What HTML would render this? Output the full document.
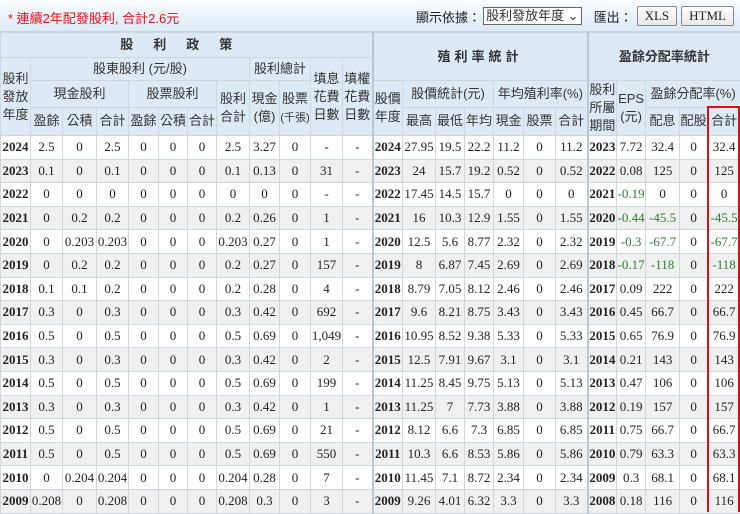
<!DOCTYPE html>
<html><head><meta charset="utf-8"><style>
*{margin:0;padding:0;box-sizing:border-box}
body{width:740px;height:512px;overflow:hidden;background:#fff;position:relative;font-family:"Liberation Serif","Noto Serif CJK SC",serif;}
.top{position:absolute;left:0;top:0;width:740px;height:32px;background:linear-gradient(#fbfdff,#dce9f6);border-bottom:1px solid #c8d6e4}
.note{position:absolute;left:8px;top:8px;color:#e8101a;font:13px "Liberation Sans","Noto Sans CJK TC",sans-serif}
.ctl{position:absolute;right:6px;top:6px;font:13px "Liberation Sans","Noto Sans CJK TC",sans-serif;color:#222;display:flex;align-items:center}
.sel{border:1px solid #666;background:#fff;padding:0 2px;height:18px;line-height:16px;margin:0 12px 0 2px;font-size:13px;color:#333}
.btn{border:1px solid #888;background:linear-gradient(#fff,#e8e8e8);height:20px;line-height:18px;padding:0 7px;margin-left:4px;font-family:"Liberation Serif",serif;font-size:13px;border-radius:2px}
table{position:absolute;left:0;top:32px;border-collapse:collapse;table-layout:fixed;width:740px}
td,th{border:1px solid #cfd6dd;text-align:center;font-size:13px;color:#222;overflow:hidden;white-space:nowrap;padding:0}
th{background:#dde9f5;font-weight:normal;font-family:"Liberation Sans","Noto Sans CJK TC",sans-serif;color:#333;line-height:18px}
td{height:23.6px}
td:first-child,td.y{font-weight:bold}
.s{border-left:2px solid #b9c8d7}
tbody tr:nth-child(even) td{background:#f0f0f0}
.g{color:#2e7d32}
.box{position:absolute;left:707px;top:106px;width:33px;height:406px;border:2px solid #e01010;border-bottom:none}
.sm{font-size:11px}
</style></head><body>
<div class="top"><div class="note">* 連續2年配發股利, 合計2.6元</div>
<div class="ctl">顯示依據：<span class="sel">股利發放年度 ⌄</span>匯出：<span class="btn">XLS</span><span class="btn">HTML</span></div></div>
<table>
<colgroup><col style="width:30px"><col style="width:32px"><col style="width:34px"><col style="width:32px"><col style="width:30px"><col style="width:29px"><col style="width:29px"><col style="width:33px"><col style="width:30px"><col style="width:31px"><col style="width:32px"><col style="width:30px"><col style="width:30px"><col style="width:33px"><col style="width:29px"><col style="width:29px"><col style="width:30px"><col style="width:32px"><col style="width:32px"><col style="width:29px"><col style="width:29px"><col style="width:34px"><col style="width:28px"><col style="width:33px"></colgroup>
<thead>
<tr style="height:25px"><th colspan="12" style="font-weight:bold;letter-spacing:20px">股利政策</th><th colspan="7" rowspan="2" class="s" style="font-weight:bold;letter-spacing:4px">殖利率統計</th><th colspan="5" rowspan="2" class="s" style="font-weight:bold">盈餘分配率統計</th></tr>
<tr style="height:23px"><th rowspan="3">股利<br>發放<br>年度</th><th colspan="7">股東股利 (元/股)</th><th colspan="2">股利總計</th><th rowspan="3">填息<br>花費<br>日數</th><th rowspan="3">填權<br>花費<br>日數</th></tr>
<tr style="height:26px"><th colspan="3">現金股利</th><th colspan="3">股票股利</th><th rowspan="2">股利<br>合計</th><th rowspan="2">現金<br>(億)</th><th rowspan="2">股票<br><span class="sm">(千張)</span></th><th rowspan="2" class="s">股價<br>年度</th><th colspan="3">股價統計(元)</th><th colspan="3">年均殖利率(%)</th><th rowspan="2" class="s">股利<br>所屬<br>期間</th><th rowspan="2">EPS<br>(元)</th><th colspan="3">盈餘分配率(%)</th></tr>
<tr style="height:27px"><th>盈餘</th><th>公積</th><th>合計</th><th>盈餘</th><th>公積</th><th>合計</th><th>最高</th><th>最低</th><th>年均</th><th>現金</th><th>股票</th><th>合計</th><th>配息</th><th>配股</th><th>合計</th></tr>
</thead>
<tbody>
<tr><td>2024</td><td>2.5</td><td>0</td><td>2.5</td><td>0</td><td>0</td><td>0</td><td>2.5</td><td>3.27</td><td>0</td><td>-</td><td>-</td><td class="y s">2024</td><td>27.95</td><td>19.5</td><td>22.2</td><td>11.2</td><td>0</td><td>11.2</td><td class="y s">2023</td><td>7.72</td><td>32.4</td><td>0</td><td>32.4</td></tr>
<tr><td>2023</td><td>0.1</td><td>0</td><td>0.1</td><td>0</td><td>0</td><td>0</td><td>0.1</td><td>0.13</td><td>0</td><td>31</td><td>-</td><td class="y s">2023</td><td>24</td><td>15.7</td><td>19.2</td><td>0.52</td><td>0</td><td>0.52</td><td class="y s">2022</td><td>0.08</td><td>125</td><td>0</td><td>125</td></tr>
<tr><td>2022</td><td>0</td><td>0</td><td>0</td><td>0</td><td>0</td><td>0</td><td>0</td><td>0</td><td>0</td><td>-</td><td>-</td><td class="y s">2022</td><td>17.45</td><td>14.5</td><td>15.7</td><td>0</td><td>0</td><td>0</td><td class="y s">2021</td><td class="g">-0.19</td><td>0</td><td>0</td><td>0</td></tr>
<tr><td>2021</td><td>0</td><td>0.2</td><td>0.2</td><td>0</td><td>0</td><td>0</td><td>0.2</td><td>0.26</td><td>0</td><td>1</td><td>-</td><td class="y s">2021</td><td>16</td><td>10.3</td><td>12.9</td><td>1.55</td><td>0</td><td>1.55</td><td class="y s">2020</td><td class="g">-0.44</td><td class="g">-45.5</td><td>0</td><td class="g">-45.5</td></tr>
<tr><td>2020</td><td>0</td><td>0.203</td><td>0.203</td><td>0</td><td>0</td><td>0</td><td>0.203</td><td>0.27</td><td>0</td><td>1</td><td>-</td><td class="y s">2020</td><td>12.5</td><td>5.6</td><td>8.77</td><td>2.32</td><td>0</td><td>2.32</td><td class="y s">2019</td><td class="g">-0.3</td><td class="g">-67.7</td><td>0</td><td class="g">-67.7</td></tr>
<tr><td>2019</td><td>0</td><td>0.2</td><td>0.2</td><td>0</td><td>0</td><td>0</td><td>0.2</td><td>0.27</td><td>0</td><td>157</td><td>-</td><td class="y s">2019</td><td>8</td><td>6.87</td><td>7.45</td><td>2.69</td><td>0</td><td>2.69</td><td class="y s">2018</td><td class="g">-0.17</td><td class="g">-118</td><td>0</td><td class="g">-118</td></tr>
<tr><td>2018</td><td>0.1</td><td>0.1</td><td>0.2</td><td>0</td><td>0</td><td>0</td><td>0.2</td><td>0.28</td><td>0</td><td>4</td><td>-</td><td class="y s">2018</td><td>8.79</td><td>7.05</td><td>8.12</td><td>2.46</td><td>0</td><td>2.46</td><td class="y s">2017</td><td>0.09</td><td>222</td><td>0</td><td>222</td></tr>
<tr><td>2017</td><td>0.3</td><td>0</td><td>0.3</td><td>0</td><td>0</td><td>0</td><td>0.3</td><td>0.42</td><td>0</td><td>692</td><td>-</td><td class="y s">2017</td><td>9.6</td><td>8.21</td><td>8.75</td><td>3.43</td><td>0</td><td>3.43</td><td class="y s">2016</td><td>0.45</td><td>66.7</td><td>0</td><td>66.7</td></tr>
<tr><td>2016</td><td>0.5</td><td>0</td><td>0.5</td><td>0</td><td>0</td><td>0</td><td>0.5</td><td>0.69</td><td>0</td><td>1,049</td><td>-</td><td class="y s">2016</td><td>10.95</td><td>8.52</td><td>9.38</td><td>5.33</td><td>0</td><td>5.33</td><td class="y s">2015</td><td>0.65</td><td>76.9</td><td>0</td><td>76.9</td></tr>
<tr><td>2015</td><td>0.3</td><td>0</td><td>0.3</td><td>0</td><td>0</td><td>0</td><td>0.3</td><td>0.42</td><td>0</td><td>2</td><td>-</td><td class="y s">2015</td><td>12.5</td><td>7.91</td><td>9.67</td><td>3.1</td><td>0</td><td>3.1</td><td class="y s">2014</td><td>0.21</td><td>143</td><td>0</td><td>143</td></tr>
<tr><td>2014</td><td>0.5</td><td>0</td><td>0.5</td><td>0</td><td>0</td><td>0</td><td>0.5</td><td>0.69</td><td>0</td><td>199</td><td>-</td><td class="y s">2014</td><td>11.25</td><td>8.45</td><td>9.75</td><td>5.13</td><td>0</td><td>5.13</td><td class="y s">2013</td><td>0.47</td><td>106</td><td>0</td><td>106</td></tr>
<tr><td>2013</td><td>0.3</td><td>0</td><td>0.3</td><td>0</td><td>0</td><td>0</td><td>0.3</td><td>0.42</td><td>0</td><td>1</td><td>-</td><td class="y s">2013</td><td>11.25</td><td>7</td><td>7.73</td><td>3.88</td><td>0</td><td>3.88</td><td class="y s">2012</td><td>0.19</td><td>157</td><td>0</td><td>157</td></tr>
<tr><td>2012</td><td>0.5</td><td>0</td><td>0.5</td><td>0</td><td>0</td><td>0</td><td>0.5</td><td>0.69</td><td>0</td><td>21</td><td>-</td><td class="y s">2012</td><td>8.12</td><td>6.6</td><td>7.3</td><td>6.85</td><td>0</td><td>6.85</td><td class="y s">2011</td><td>0.75</td><td>66.7</td><td>0</td><td>66.7</td></tr>
<tr><td>2011</td><td>0.5</td><td>0</td><td>0.5</td><td>0</td><td>0</td><td>0</td><td>0.5</td><td>0.69</td><td>0</td><td>550</td><td>-</td><td class="y s">2011</td><td>10.3</td><td>6.6</td><td>8.53</td><td>5.86</td><td>0</td><td>5.86</td><td class="y s">2010</td><td>0.79</td><td>63.3</td><td>0</td><td>63.3</td></tr>
<tr><td>2010</td><td>0</td><td>0.204</td><td>0.204</td><td>0</td><td>0</td><td>0</td><td>0.204</td><td>0.28</td><td>0</td><td>7</td><td>-</td><td class="y s">2010</td><td>11.45</td><td>7.1</td><td>8.72</td><td>2.34</td><td>0</td><td>2.34</td><td class="y s">2009</td><td>0.3</td><td>68.1</td><td>0</td><td>68.1</td></tr>
<tr><td>2009</td><td>0.208</td><td>0</td><td>0.208</td><td>0</td><td>0</td><td>0</td><td>0.208</td><td>0.3</td><td>0</td><td>3</td><td>-</td><td class="y s">2009</td><td>9.26</td><td>4.01</td><td>6.32</td><td>3.3</td><td>0</td><td>3.3</td><td class="y s">2008</td><td>0.18</td><td>116</td><td>0</td><td>116</td></tr>
</tbody></table>
<div class="box"></div>
</body></html>
